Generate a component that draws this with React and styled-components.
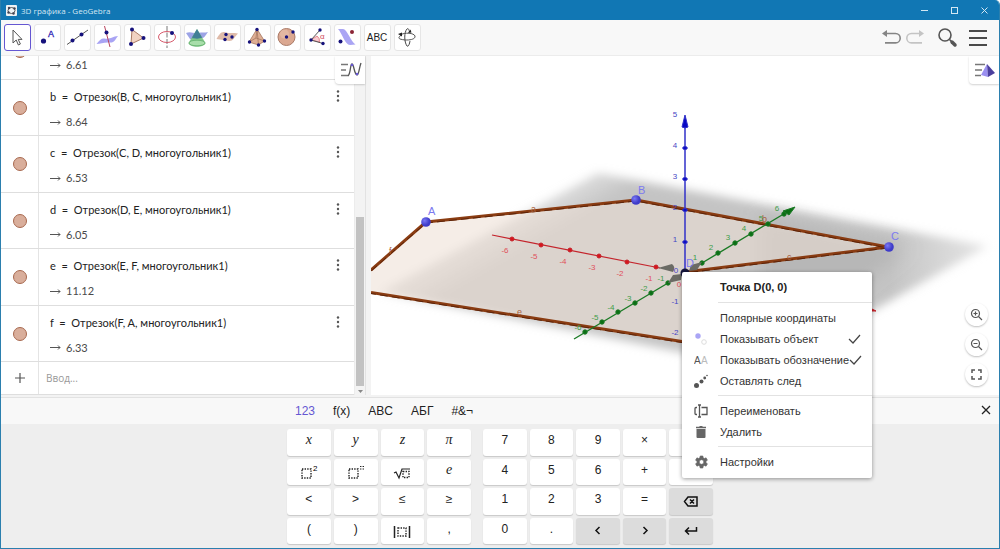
import React from "react";
import styled, { createGlobalStyle } from "styled-components";

const GlobalStyle = createGlobalStyle`
    * {
        box-sizing: border-box;
    }
    body {
        margin: 0;
        font-family: "Liberation Sans", Arial, sans-serif;
        font-size: 12px;
        color: #222;
    }
    button {
        font: inherit;
        color: inherit;
        border: 0;
        padding: 0;
        background: none;
    }
`;

const Window = styled.div`
    min-height: 100vh;
    display: flex;
    flex-direction: column;
    overflow: hidden;
    background: #f4f4f4;
    border: 1px solid #2b7fae;
    border-top: 0;
    border-radius: 0 5px 0 0;
`;

const TitleBar = styled.header`
    height: 20px;
    flex: none;
    display: flex;
    align-items: center;
    padding: 0 0 0 5px;
    background: #1177b4;
    color: #d3e7f3;
`;

const Title = styled.h1`
    margin: 0;
    padding-left: 4px;
    flex: 1;
    font: 8px "Open Sans", "Noto Sans", sans-serif;
`;

const CaptionButton = styled.button`
    width: 30px;
    height: 20px;
    display: flex;
    align-items: center;
    justify-content: center;
`;

const Toolbar = styled.nav`
    height: 36px;
    flex: none;
    display: flex;
    align-items: center;
    gap: 3px;
    padding: 0 9px 0 3px;
    background: #f8f8f8;
    border-bottom: 1px solid #ececec;
`;

const Tool = styled.button`
    width: 27px;
    height: 27px;
    display: block;
    background: #fff;
    border: 1px solid ${props => (props.$active ? "#6557d2" : "#e6e6e6")};
    border-radius: 3px;

    svg {
        display: block;
        margin: -1px;
    }
`;

const Spacer = styled.div`
    flex: 1;
`;

const BarButton = styled.button`
    width: 24px;
    height: 24px;
    margin-left: ${props => (props.$apart ? "4px" : "-3px")};

    svg {
        display: block;
    }
`;

const Views = styled.main`
    flex: 1 1 338px;
    display: flex;
    min-height: 0;
    gap: 5px;
    padding-bottom: 2px;
    background: #f3f3f3;
`;

const Algebra = styled.section`
    position: relative;
    flex: 0 0 365px;
    display: flex;
    background: #fff;
    border-right: 1px solid #e2e2e2;
`;

const RowList = styled.ul`
    flex: 1;
    display: flex;
    flex-direction: column;
    margin: 0;
    padding: 0;
    list-style: none;
`;

const Row = styled.li`
    flex: ${props => (props.$partial ? "0 0 24px" : "1 1 56px")};
    min-height: 0;
    display: flex;
    overflow: hidden;
    align-items: ${props => (props.$partial ? "flex-end" : "stretch")};
    border-bottom: 1px solid #dedede;
`;

const InputRow = styled(Row)`
    flex: 0 0 33px;
`;

const MarbleCell = styled.div`
    width: 38px;
    min-height: 56px;
    flex: none;
    display: flex;
    align-items: center;
    justify-content: center;
    border-right: 1px solid #e4e4e4;

    ${InputRow} & {
        min-height: 0;
    }
`;

const Marble = styled.button`
    width: 14px;
    height: 14px;
    border-radius: 50%;
    background: #d9ae9b;
    border: 1px solid #a8694f;
`;

const RowText = styled.div`
    flex: 1;
    min-height: 56px;
    display: flex;
    flex-direction: column;
    gap: 9px;
    padding: 9px 0 0 11px;
    font-family: Lato, "Noto Sans", sans-serif;
    font-size: 11px;
    line-height: 16px;
    white-space: pre;
`;

const Result = styled.div`
    color: #4a4a4a;
    display: flex;
    align-items: center;
    gap: 5px;
`;

const RowMenu = styled.button`
    align-self: flex-start;
    width: 20px;
    height: 20px;
    margin: 6px 6px 0 0;

    svg {
        display: block;
        margin: auto;
    }
`;

const EntryField = styled.input`
    flex: 1;
    min-width: 0;
    border: 0;
    outline: 0;
    padding: 0 7px;
    font: 10px "Open Sans", "Noto Sans", sans-serif;

    &::placeholder {
        color: #999;
    }
`;

const ScrollTrack = styled.div`
    width: 11px;
    display: flex;
    flex-direction: column;
    justify-content: flex-end;
    align-items: center;
    background: #f3f3f3;
    border-left: 1px solid #ececec;

    svg {
        flex: none;
    }
`;

const ScrollThumb = styled.div`
    width: 8px;
    height: 50%;
    background: #c2c2c2;
`;

const StyleBarButton = styled.button`
    position: absolute;
    top: 0;
    right: 0;
    width: 30px;
    height: 28px;
    background: #fff;
    border-radius: 0 0 0 4px;
    box-shadow: 0 1px 2px rgba(0, 0, 0, 0.18);

    svg {
        display: block;
    }
`;

const Graphics = styled.section`
    position: relative;
    flex: 1;
    min-width: 0;
    background: #fff;
    overflow: hidden;
`;

const Scene = styled.svg`
    position: absolute;
    inset: 0;
    width: 100%;
    height: 100%;
    font-family: "Liberation Sans", Arial, sans-serif;
    font-size: 8px;
`;

const ZoomButtons = styled.div`
    position: absolute;
    right: 11px;
    bottom: 9px;
    display: flex;
    flex-direction: column;
    gap: 7px;
`;

const RoundButton = styled.button`
    width: 23px;
    height: 23px;
    border-radius: 50%;
    background: #fff;
    box-shadow: 0 1px 2px rgba(0, 0, 0, 0.25);

    svg {
        display: block;
        margin: auto;
    }
`;

const Keyboard = styled.section`
    flex: none;
    background: #eee;
    border-top: 1px solid #e2e2e2;
`;

const Tabs = styled.div`
    height: 26px;
    display: flex;
    align-items: center;
    gap: 18px;
    padding: 0 8px 0 294px;
    background: #f8f8f8;
`;

const Tab = styled.button`
    color: ${props => (props.$active ? "#6557d2" : "#222")};
`;

const Keys = styled.div`
    display: flex;
    justify-content: center;
    gap: 12px;
    padding: 5px 0 4px;
`;

const KeyGroup = styled.div`
    width: ${props => (props.$cols === 4 ? "184px" : "230px")};
    height: 115px;
    display: grid;
    grid-template-columns: repeat(${props => props.$cols}, 1fr);
    grid-template-rows: repeat(4, 1fr);
    gap: 3px;
`;

const Key = styled.button`
    display: flex;
    align-items: center;
    justify-content: center;
    padding-bottom: 4px;
    background: ${props => (props.$dark ? "#dcdcdc" : "#fff")};
    border-radius: 3px;
    box-shadow: 0 1px 1px rgba(0, 0, 0, 0.16);
    font-family: ${props => (props.$math ? '"Liberation Serif", serif' : "inherit")};
    font-style: ${props => (props.$math ? "italic" : "normal")};
    font-size: ${props => (props.$math ? "14px" : "12px")};

    svg {
        position: relative;
        top: 2px;
    }
`;

const ContextMenu = styled.div`
    position: absolute;
    left: 682px;
    top: 272px;
    width: 190px;
    padding: 5px 0 6px;
    background: #fff;
    border-radius: 2px;
    box-shadow: 0 1px 4px rgba(0, 0, 0, 0.4);
    color: #333;
`;

const MenuTitle = styled.div`
    padding-left: 38px;
    line-height: 21px;
    font-weight: bold;
    font-size: 11px;
    color: #222;
`;

const MenuItem = styled.button`
    width: 100%;
    height: 21px;
    display: flex;
    align-items: center;
    text-align: left;
    white-space: nowrap;
    font-size: 11px;

    svg {
        flex: none;
    }
`;

const MenuIcon = styled.span`
    width: 38px;
    flex: none;
    display: flex;
    justify-content: center;
    color: #666;
    font-size: 10px;
`;

const MenuLabel = styled.span`
    flex: 1;
`;

const Divider = styled.hr`
    margin: 4px 0 4px 36px;
    border: 0;
    border-top: 1px solid #e2e2e2;
`;

const NAVY = "#16127c";

const Dot = ({ x, y, r = 2, c = NAVY }) => <circle cx={x} cy={y} r={r} fill={c} />;

const tools = [
    ["Перемещать", <path d="M9 6v13l3.2-3 2.2 5 2-1-2.2-4.6H18z" fill="#fff" stroke="#555" />],
    ["Точка", <><Dot x={9.5} y={17} r={2.6} /><text x="14" y="13" fontSize="9" fill="#2a21b4" stroke="#2a21b4" strokeWidth=".3">A</text></>],
    ["Прямая", <><path d="M3 20.5 24 6" stroke="#555" /><Dot x={8.5} y={16.5} /><Dot x={17.5} y={10.5} /></>],
    ["Перпендикулярная прямая", <><path d="M2.5 20c3-4 5-6 8-5.500 6 1 8-2 13.500-2.500-3 4-4 7-8 6.500-6-.5-9 1-13.500 1.500z" fill="#a9a4f4" /><path d="m10.500 2 5.500 21" stroke="#b8445e" /><Dot x={12.5} y={8.5} /></>],
    ["Многоугольник", <><path d="m8 5.500 11.500 8.500L7 20z" fill="#f1d3c3" stroke="#a97a65" /><Dot x={8} y={5.5} /><Dot x={19.5} y={14} /><Dot x={7} y={20} /></>],
    ["Окружность", <><path d="M13 2v22" stroke="#777" strokeDasharray="5 1.500" /><ellipse cx="13" cy="13" rx="8.500" ry="5.500" fill="none" stroke="#d65a6c" /><Dot x={18} y={9} /></>],
    ["Пересечение поверхностей", <><path d="M2 9c5-2 8 1 12 0s7 0 10-1c-3 4-4 7-8 6s-7 2-10 1z" fill="#9da4e6" /><path d="m13 5 8.500 14c-1 5-16 5-17 0z" fill="#6fbf79" fillOpacity=".85" /><path d="m13 5 5 8.500c-2 1.500-8 1.500-10 0z" fill="#417f96" /><ellipse cx="13" cy="19" rx="8" ry="2.800" fill="#a8deaa" stroke="#5cab65" strokeWidth=".7" /></>],
    ["Плоскость через три точки", <><path d="M2.500 15c3-5 5-8 9-6.500 4 1 8 0 12.500 1-4 4-5 8-9 7.500-4-1-8-1-12.500-2z" fill="#dfbba9" /><Dot x={12} y={10.5} r={1.7} /><Dot x={18} y={13} r={1.7} /><Dot x={11} y={15.5} r={1.7} /></>],
    ["Пирамида", <><path d="m13 5-8 13 9.500 3 6-4z" fill="#dfae94" stroke="#a5765f" strokeWidth=".8" /><path d="m13 5 1.500 16M5 18l7-4 8.500 3M13 5l-1 9" fill="none" stroke="#a5765f" strokeWidth=".8" /><Dot x={13} y={5.5} r={1.7} /><Dot x={5.5} y={18} r={1.7} /><Dot x={14.5} y={21} r={1.7} /><Dot x={20.5} y={17} r={1.7} /></>],
    ["Сфера", <><circle cx="12.500" cy="13" r="8.500" fill="#dba891" stroke="#aa7a67" /><circle cx="10.500" cy="10" r="4.500" fill="#e8c1ae" fillOpacity=".6" /><Dot x={12.5} y={13} r={1.7} /><Dot x={19} y={8} r={1.7} /></>],
    ["Угол", <><path d="m7 16 6-4q3 2 2.500 6z" fill="#f9ccd1" stroke="#d5606c" strokeWidth=".7" /><path d="m16 6-9 10 12 3.500" fill="none" stroke="#555" /><text x="16" y="15" fontSize="8" fill="#d14b5d">α</text><Dot x={16} y={6} r={1.7} /><Dot x={7} y={16} r={1.7} /><Dot x={19} y={19.5} r={1.7} /></>],
    ["Отражение", <><path d="M4 5h5c4 0 8 13 12.500 15.500L16 21C11 21 8 9 4 5z" fill="#aaa5f4" /><Dot x={6.5} y={17.5} /><Dot x={18} y={8} c="#8b2436" /></>],
    ["Текст", <text x="13" y="17" textAnchor="middle" fontSize="10" fill="#222">ABC</text>],
    ["Вращать вид", <g fill="none" stroke="#444"><path d="M13 5c-3 3-3 13 0 17 1.500 1 2.500-2 3-5M13 5c1-1 2 0 2.500 3" /><path d="M6 11c5-3 14-2 15 1 1 4-9 5-15 3-2-1-1-3 2-4" strokeWidth=".9" /><path d="m4 10 4-1.500v4zM14 9l3.500-.5-1-3z" fill="#222" stroke="none" /></g>],
];

const rows = [
    ["b", "B, C"],
    ["c", "C, D"],
    ["d", "D, E"],
    ["e", "E, F"],
    ["f", "F, A"],
];
const values = ["8.64", "6.53", "6.05", "11.12", "6.33"];

const Arrow = () => (
    <svg width="11" height="7" fill="none" stroke="#555" aria-hidden="true">
        <path d="M0 3.500h10M8 1.500l2 2-2 2" />
    </svg>
);

const DotsIcon = () => (
    <svg width="4" height="14" fill="#555" aria-hidden="true">
        <circle cx="2" cy="2.500" r="1.200" />
        <circle cx="2" cy="7" r="1.200" />
        <circle cx="2" cy="11.500" r="1.200" />
    </svg>
);

function AlgebraRow({ name, args, value, partial }) {
    return (
        <Row $partial={partial}>
            <MarbleCell>
                <Marble aria-label={"Показать " + name} />
            </MarbleCell>
            <RowText>
                <div>{`${name}  =  Отрезок(${args}, многоугольник1)`}</div>
                <Result><Arrow />{value}</Result>
            </RowText>
            {!partial && <RowMenu aria-label="Ещё"><DotsIcon /></RowMenu>}
        </Row>
    );
}

const xTicks = [[512, 239], [541, 245], [570, 250], [599, 256], [627, 262], [656, 267]];
const yTicks = [[585, 332], [602, 322], [618, 312], [635, 303], [651, 293], [668, 283]];
const yTicksFar = [[702, 263], [718, 253], [735, 243], [751, 234], [768, 224], [784, 214]];
const zTicks = [[335, -2], [304, -1], [242, 1], [210, 2], [179, 3], [148, 4]];

function Scene3D() {
    const outline = "M371 270 426 222 636 200 888 247 685 272 685 342 371 292.500";
    return (
        <Scene viewBox="371 56 628 339" preserveAspectRatio="xMidYMid slice" role="img" aria-label="3D полотно">
            <defs>
                <filter id="fog" x="-20%" y="-30%" width="140%" height="160%">
                    <feGaussianBlur stdDeviation="5" />
                </filter>
                <filter id="core" x="-20%" y="-30%" width="140%" height="160%">
                    <feGaussianBlur stdDeviation="9" />
                </filter>
                <linearGradient id="plane" gradientUnits="userSpaceOnUse" x1="464" y1="216" x2="494" y2="268">
                    <stop offset="0" stopColor="#c4c4c4" stopOpacity="0" />
                    <stop offset="0.5" stopColor="#c4c4c4" stopOpacity="0.600" />
                    <stop offset="1" stopColor="#c4c4c4" />
                </linearGradient>
                <linearGradient id="tip" gradientUnits="userSpaceOnUse" x1="890" y1="0" x2="990" y2="0">
                    <stop offset="0" stopColor="#fff" stopOpacity="0" />
                    <stop offset="1" stopColor="#fff" stopOpacity="0.600" />
                </linearGradient>
                <radialGradient id="ball" cx="35%" cy="35%">
                    <stop offset="0" stopColor="#7a78f5" />
                    <stop offset="1" stopColor="#3f3cc9" />
                </radialGradient>
            </defs>
            <path d="M598 173 988 246 874 310 760 368 380 292z" fill="url(#plane)" filter="url(#fog)" />
            <path d="M760 215 910 247 862 285 760 320z" fill="#999" fillOpacity=".3" filter="url(#core)" />
            <path d="M860 210 999 235v30L860 330z" fill="url(#tip)" />
            <path d={outline + "z"} fill="#eddfd5" fillOpacity=".56" />
            <path d={outline} fill="none" stroke="#8a3c12" strokeWidth="3" strokeLinejoin="round" />
            <path d={outline} fill="none" stroke="#5c240a" strokeWidth="1" strokeDasharray="8 4" transform="translate(0 1)" />
            <g stroke="#c4242c" fill="#d8141c">
                <path d="m492 235 168 33" strokeWidth="1.200" />
                {xTicks.map(([x, y]) => <circle key={x} cx={x} cy={y} r="2" />)}
                <path d="m870 308 6 3-6 0z" />
            </g>
            <g stroke="#1b7a25" fill="#0b6f14">
                <path d="m574 339 94-56M702 263l85-51" strokeWidth="1.400" />
                {yTicks.concat(yTicksFar).map(([x, y]) => <circle key={x} cx={x} cy={y} r="2.200" />)}
                <path d="m783 211 12-4-6 8z" />
            </g>
            <g stroke="#3030c8" fill="#0909c5">
                <path d="M685 127v215" strokeWidth="1.500" />
                {zTicks.map(([y]) => <ellipse key={y} cx="685" cy={y} rx="2.300" ry="1.500" />)}
                <path d="m685 115 3 12q-3 2-6 0z" />
            </g>
            <g fill="#6b6b65">
                <path d="m658 268 14-4q4 3 1 8z" />
                <path d="m668 283 5-8 9-1-1 6zM702 262l-5 8-8 1 2-6z" />
            </g>
            <circle cx="685" cy="273" r="4.500" fill="#15153c" />
            <circle cx="426" cy="222" r="4.800" fill="url(#ball)" />
            <circle cx="636" cy="200" r="4.800" fill="url(#ball)" />
            <circle cx="889" cy="247" r="4.800" fill="url(#ball)" />
            <g fill="#e0505a" textAnchor="middle">
                {xTicks.map(([x, y], i) => <text key={x} x={x - 7} y={y + 14}>{i - 6}</text>)}
                <text x="679" y="287">0</text>
            </g>
            <g fill="#3e9c48" textAnchor="middle">
                {yTicks.map(([x, y], i) => <text key={x} x={x - 7} y={y - 2}>{i - 6}</text>)}
                {yTicksFar.map(([x, y], i) => <text key={x} x={x - 7} y={y - 3}>{i + 1}</text>)}
            </g>
            <g fill="#4646c4" textAnchor="middle">
                {zTicks.map(([y, n]) => <text key={n} x="675" y={y}>{n}</text>)}
                <text x="675" y="117">5</text>
                <text x="676" y="273">0</text>
            </g>
            <g fill="#7c7af0" fontSize="11">
                <text x="428" y="215">A</text>
                <text x="638" y="194">B</text>
                <text x="891" y="240">C</text>
                <text x="686" y="267">D</text>
            </g>
            <g fill="#a8603c" fontSize="9">
                <text x="531" y="212">a</text>
                <text x="762" y="222">b</text>
                <text x="787" y="260">c</text>
                <text x="517" y="315">e</text>
                <text x="389" y="254">f</text>
            </g>
        </Scene>
    );
}

const Box = ({ x, y, s = 9 }) => (
    <rect x={x} y={y} width={s} height={s} fill="none" stroke="#222" strokeWidth="1.400" strokeDasharray="1.400 1.200" />
);

const mathKeys = [
    ["x", "x", true],
    ["y", "y", true],
    ["z", "z", true],
    ["π", "π", true],
    ["квадрат", <svg width="18" height="16"><Box x={2} y={5} s={9} /><text x="13" y="7" fontSize="8" fontStyle="normal">2</text></svg>],
    ["степень", <svg width="18" height="16"><Box x={2} y={5} s={9} /><path d="M13 2.500h4M13 5h4" stroke="#222" strokeWidth="1.200" strokeDasharray="1.400 1.200" /></svg>],
    ["корень", <svg width="18" height="16"><path d="m1 9 2-1 3 6 3-9h8" fill="none" stroke="#222" strokeWidth="1.200" /><Box x={10} y={7.5} s={6} /></svg>],
    ["e", "e", true],
    ["<", "<"],
    [">", ">"],
    ["≤", "≤"],
    ["≥", "≥"],
    ["(", "("],
    [")", ")"],
    ["модуль", <svg width="18" height="16"><path d="M1.500 3v12M16.500 3v12" stroke="#222" strokeWidth="1.500" /><Box x={5} y={5} s={8} /></svg>],
    [",", ","],
];

const numberKeys = [
    "7", "8", "9", "×", "÷",
    "4", "5", "6", "+", "−",
    "1", "2", "3", "=", "back",
    "0", ".", "left", "right", "enter",
];

const keyIcons = {
    back: <path d="M5 3h9v9H5L1.500 7.500zM7 5.500l4 4M11 5.500l-4 4" />,
    left: <path d="M9.500 4 6 7.500 9.500 11" />,
    right: <path d="M6.500 4 10 7.500 6.500 11" />,
    enter: <path d="M13.500 4v4H2.500M6 4.500 2.500 8 6 11.500" />,
};

const Check = () => (
    <svg width="24" height="12" fill="none" stroke="#444" strokeWidth="1.200" aria-hidden="true">
        <path d="m1 6 4 4 7-8" />
    </svg>
);

const menuIcons = {
    show: <svg width="14" height="14"><circle cx="4" cy="4" r="2.700" fill="#aaa5f5" /><circle cx="10" cy="10" r="2.300" fill="#fff" stroke="#ddd" /></svg>,
    trace: <svg width="14" height="14" fill="#555"><circle cx="2.500" cy="11.500" r="2.500" /><circle cx="7.500" cy="7.500" r="2" /><circle cx="10.700" cy="4" r="1.400" /><circle cx="13" cy="1.500" r=".8" /></svg>,
    rename: <svg width="14" height="14" fill="none" stroke="#555" strokeWidth="1.300"><path d="M3 3.500H2a1 1 0 0 0-1 1v5a1 1 0 0 0 1 1h1M7.500 3.500h5.500v7H7.500M5.500 1v12M4 1h3M4 13h3" /></svg>,
    remove: <svg width="14" height="14" fill="#666"><path d="M2.500 4h9v8q0 1-1 1h-7q-1 0-1-1zM2 1.800h3l1-.8h2l1 .8h3v1.400H2z" /></svg>,
    settings: <svg width="16" height="16" viewBox="0 0 24 24" fill="#666"><path d="M19.400 13c.1-.6.1-1.300 0-2l2.200-1.700-2-3.500-2.700 1a8 8 0 0 0-1.700-1L14.800 3h-4l-.5 2.800a8 8 0 0 0-1.700 1l-2.700-1-2 3.500L6.100 11a8 8 0 0 0 0 2l-2.200 1.700 2 3.500 2.700-1a8 8 0 0 0 1.700 1l.5 2.800h4l.4-2.800a8 8 0 0 0 1.700-1l2.700 1 2-3.500zM12.800 15.500a3.500 3.500 0 1 1 0-7 3.500 3.500 0 0 1 0 7z" stroke="#666" /></svg>,
};

function PointMenu() {
    return (
        <ContextMenu role="menu">
            <MenuTitle>Точка D(0, 0)</MenuTitle>
            <Divider />
            <MenuItem role="menuitem"><MenuIcon /><MenuLabel>Полярные координаты</MenuLabel></MenuItem>
            <MenuItem role="menuitem"><MenuIcon>{menuIcons.show}</MenuIcon><MenuLabel>Показывать объект</MenuLabel><Check /></MenuItem>
            <MenuItem role="menuitem">
                <MenuIcon>
                    <svg width="14" height="10" fontSize="10" aria-hidden="true">
                        <text x="0" y="9" fill="#555">A</text>
                        <text x="7" y="9" fill="#bbb">A</text>
                    </svg>
                </MenuIcon>
                <MenuLabel>Показывать обозначение</MenuLabel>
                <Check />
            </MenuItem>
            <MenuItem role="menuitem"><MenuIcon>{menuIcons.trace}</MenuIcon><MenuLabel>Оставлять след</MenuLabel></MenuItem>
            <Divider />
            <MenuItem role="menuitem"><MenuIcon>{menuIcons.rename}</MenuIcon><MenuLabel>Переименовать</MenuLabel></MenuItem>
            <MenuItem role="menuitem"><MenuIcon>{menuIcons.remove}</MenuIcon><MenuLabel>Удалить</MenuLabel></MenuItem>
            <Divider />
            <MenuItem role="menuitem"><MenuIcon>{menuIcons.settings}</MenuIcon><MenuLabel>Настройки</MenuLabel></MenuItem>
        </ContextMenu>
    );
}

function App() {
    return (
        <Window>
            <GlobalStyle />
            <TitleBar>
                <svg width="11" height="11" aria-hidden="true">
                    <rect width="11" height="11" rx="1" fill="#eef2f5" />
                    <ellipse cx="5.500" cy="5.500" rx="3.500" ry="3" fill="none" stroke="#555" />
                    <g fill="#445"><circle cx="3" cy="3" r="1.200" /><circle cx="8.500" cy="3.500" r="1.200" /><circle cx="2.500" cy="7.500" r="1.200" /><circle cx="7.500" cy="8.500" r="1.200" /></g>
                </svg>
                <Title>3D графика - GeoGebra</Title>
                <CaptionButton aria-label="Свернуть"><svg width="7" height="7" stroke="#d3e7f3"><path d="M0 3.500h7" /></svg></CaptionButton>
                <CaptionButton aria-label="Развернуть"><svg width="7" height="7" stroke="#d3e7f3" fill="none"><rect x=".5" y=".5" width="6" height="6" /></svg></CaptionButton>
                <CaptionButton aria-label="Закрыть"><svg width="7" height="7" stroke="#d3e7f3"><path d="m.5.5 6 6M6.500.5l-6 6" /></svg></CaptionButton>
            </TitleBar>
            <Toolbar>
                {tools.map(([label, icon], i) => (
                    <Tool key={label} $active={i === 0} aria-label={label}>
                        <svg width="27" height="27" viewBox="0 0 27 27" fill="none">{icon}</svg>
                    </Tool>
                ))}
                <Spacer />
                <BarButton aria-label="Отменить">
                    <svg width="24" height="24" fill="none" stroke="#858585" strokeWidth="1.600"><path d="M6 7.500h9.500a4.700 4.700 0 0 1 0 9.400H5" /><path d="M2 7.500 7 4v7z" fill="#858585" stroke="none" /></svg>
                </BarButton>
                <BarButton aria-label="Повторить">
                    <svg width="24" height="24" fill="none" stroke="#c4c4c4" strokeWidth="1.600"><path d="M17 7.500H7.500a4.700 4.700 0 0 0 0 9.400H18" /><path d="M20 7.500 15 4v7z" fill="#c4c4c4" stroke="none" /></svg>
                </BarButton>
                <BarButton $apart aria-label="Поиск">
                    <svg width="24" height="24" fill="none" stroke="#555" strokeWidth="1.600"><circle cx="10" cy="9" r="6" /><path d="m14.500 13.500 3 3" /><path d="m17 16 3 3" strokeWidth="3.500" strokeLinecap="round" /></svg>
                </BarButton>
                <BarButton $apart aria-label="Меню">
                    <svg width="24" height="24" stroke="#4a4a4a" strokeWidth="2"><path d="M3 5h18M3 12h18M3 19h18" /></svg>
                </BarButton>
            </Toolbar>
            <Views>
                <Algebra>
                    <RowList>
                        <AlgebraRow partial name="a" args="A, B" value="6.61" />
                        {rows.map(([name, args], i) => (
                            <AlgebraRow key={name} name={name} args={args} value={values[i]} />
                        ))}
                        <InputRow>
                            <MarbleCell>
                                <svg width="10" height="10" stroke="#555" strokeWidth="1.200" aria-hidden="true"><path d="M5 0v10M0 5h10" /></svg>
                            </MarbleCell>
                            <EntryField placeholder="Ввод..." aria-label="Ввод" />
                        </InputRow>
                    </RowList>
                    <ScrollTrack>
                        <ScrollThumb />
                        <svg width="8" height="9" fill="#888" aria-hidden="true"><path d="M2 4h5L4.500 7z" /></svg>
                    </ScrollTrack>
                    <StyleBarButton aria-label="Панель стилей">
                        <svg width="30" height="28" fill="none" stroke="#777" strokeWidth="1.300"><path d="M6 8.500h7M6 14h5M6 19.500h7" /><path d="M13 20c3-3 2-12 4-12s2 10 5 11c2 0 2-7 4-12" stroke="#555" /><circle cx="17" cy="9" r="1.300" fill="#6557d2" stroke="none" /><circle cx="22" cy="18" r="1.300" fill="#6557d2" stroke="none" /></svg>
                    </StyleBarButton>
                </Algebra>
                <Graphics>
                    <Scene3D />
                    <StyleBarButton aria-label="Панель стилей">
                        <svg width="30" height="28" fill="none" stroke="#777" strokeWidth="1.300"><path d="M6 8.500h10M6 14h7M6 19.500h6" /><path d="m18 8-6 11 7 2z" fill="#9a8ff0" stroke="none" /><path d="m18 8 1 13 7-4z" fill="#4b3f9e" stroke="none" /></svg>
                    </StyleBarButton>
                    <ZoomButtons>
                        <RoundButton aria-label="Увеличить"><svg width="13" height="13" fill="none" stroke="#555" strokeWidth="1.200"><circle cx="5.500" cy="5.500" r="4" /><path d="m8.500 8.500 3.500 3.500M3.500 5.500h4M5.500 3.500v4" /></svg></RoundButton>
                        <RoundButton aria-label="Уменьшить"><svg width="13" height="13" fill="none" stroke="#555" strokeWidth="1.200"><circle cx="5.500" cy="5.500" r="4" /><path d="m8.500 8.500 3.500 3.500M3.500 5.500h4" /></svg></RoundButton>
                        <RoundButton aria-label="Во весь экран"><svg width="11" height="11" fill="none" stroke="#555" strokeWidth="1.500"><path d="M1 4V1h3M7 1h3v3M10 7v3H7M4 10H1V7" /></svg></RoundButton>
                    </ZoomButtons>
                </Graphics>
            </Views>
            <Keyboard>
                <Tabs>
                    <Tab $active>123</Tab>
                    <Tab>f(x)</Tab>
                    <Tab>ABC</Tab>
                    <Tab>АБГ</Tab>
                    <Tab>#&¬</Tab>
                    <Spacer />
                    <Tab aria-label="Закрыть клавиатуру"><svg width="10" height="10" stroke="#222" strokeWidth="1.300"><path d="m1 1 8 8M9 1 1 9" /></svg></Tab>
                </Tabs>
                <Keys>
                    <KeyGroup $cols={4}>
                        {mathKeys.map(([label, face, math]) => <Key key={label} aria-label={label} $math={math}>{face}</Key>)}
                    </KeyGroup>
                    <KeyGroup $cols={5}>
                        {numberKeys.map(k => (
                            <Key key={k} aria-label={k} $dark={k in keyIcons}>
                                {k in keyIcons
                                    ? <svg width="16" height="15" fill="none" stroke="#111" strokeWidth="1.500">{keyIcons[k]}</svg>
                                    : k}
                            </Key>
                        ))}
                    </KeyGroup>
                </Keys>
            </Keyboard>
            <PointMenu />
        </Window>
    );
}

export default App;
